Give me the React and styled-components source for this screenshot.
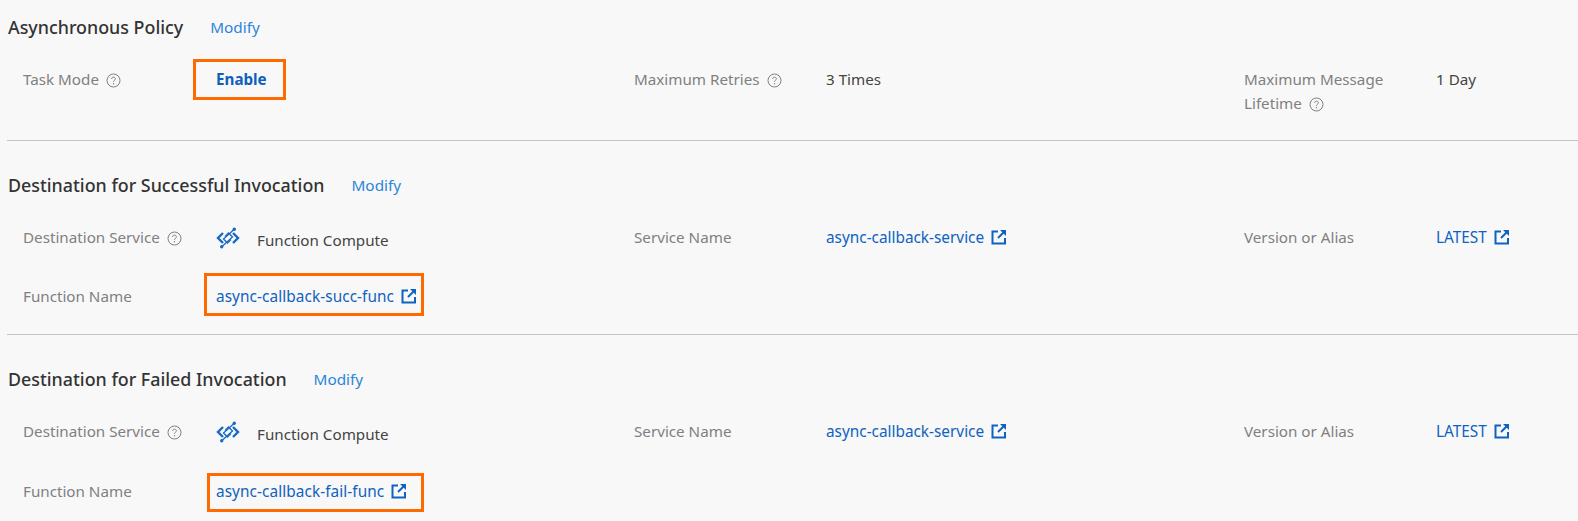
import React from 'react';
import styled, { createGlobalStyle } from 'styled-components';

const GlobalStyle = createGlobalStyle`
    html, body {
        margin: 0;
        padding: 0;
        background: #f8f8f8;
    }
    body {
        font-family: "Noto Sans", "Open Sans", sans-serif;
    }
`;

const Page = styled.div`
    width: 1578px;
    height: 521px;
    overflow: hidden;
    padding-left: 7px;
    box-sizing: border-box;
`;

const Section = styled.section`
    height: ${(p) => p.$height}px;
    padding-top: ${(p) => p.$top}px;
    box-sizing: border-box;
    border-bottom: ${(p) => (p.$last ? 'none' : '1px solid #c3c5cb')};
`;

const TitleRow = styled.div`
    display: flex;
    align-items: center;
    height: 24px;
    padding-left: 1px;
`;

const Title = styled.h3`
    margin: 0;
    font-size: 17.85px;
    font-weight: 500;
    color: #333;
`;

const Modify = styled.a`
    margin-left: 27px;
    font-size: 15.3px;
    color: #2b85d8;
`;

const Grid = styled.div`
    display: grid;
    grid-template-columns: 611px 610px 1fr;
    row-gap: ${(p) => p.$gap}px;
    margin-top: ${(p) => p.$top}px;
`;

const Item = styled.div`
    display: flex;
    align-items: flex-start;
    padding-left: 16px;
    line-height: 24px;
    font-size: 15.2px;
`;

const Label = styled.div`
    width: ${(p) => (p.$first ? 193 : 192)}px;
    flex: none;
    color: #808080;
`;

const Value = styled.div`
    display: flex;
    align-items: center;
    color: #444;
`;

const ServiceText = styled.span`
    position: relative;
    top: 3px;
`;

const Link = styled.a`
    display: inline-flex;
    align-items: center;
    font-size: 15.35px;
    letter-spacing: ${(p) => (p.$wide ? '0.08px' : 'normal')};
    color: #0f62c0;
`;

const Strong = styled.span`
    font-weight: 700;
    color: #0f5fbd;
`;

const Marked = styled.span`
    position: relative;
    display: inline-flex;
    align-items: center;

    &::after {
        content: '';
        position: absolute;
        top: ${(p) => p.$t}px;
        bottom: ${(p) => p.$b}px;
        left: ${(p) => p.$l}px;
        right: ${(p) => p.$r}px;
        border: 3px solid #ff6a00;
    }
`;

const HelpSvg = styled.svg`
    width: 15px;
    height: 15px;
    margin-left: 7px;
    vertical-align: -3px;
`;

const OutSvg = styled.svg`
    width: 16px;
    height: 16px;
    margin-left: 7px;
    flex: none;
`;

const FcSvg = styled.svg`
    width: 24px;
    height: 24px;
    margin-right: 17px;
    flex: none;
    position: relative;
    top: 1px;
`;

const Help = () => (
    <HelpSvg viewBox="0 0 15 15" fill="none" stroke="#808080">
        <circle cx="7.5" cy="7.5" r="6.5" strokeWidth="1" />
        <path d="M5.6 6c0-1.2.9-1.9 1.9-1.9s1.9.7 1.9 1.7c0 1.5-1.9 1.5-1.9 3" strokeWidth="1" />
        <circle cx="7.5" cy="10.8" r=".7" fill="#808080" stroke="none" />
    </HelpSvg>
);

const External = () => (
    <OutSvg viewBox="0 0 16 16" fill="none" stroke="#0f62c0" strokeWidth="2">
        <path d="M7 2.5H1.5v12H14V9" />
        <path d="M7 9 13 3" />
        <path d="M9 1h6v6z" fill="#0f62c0" stroke="none" />
    </OutSvg>
);

const FcIcon = () => (
    <FcSvg viewBox="0 0 24 24" fill="none" stroke="#1769c4">
        <path d="M7 7 2 12l5 5M17 7l5 5-5 5" strokeWidth="2.4" />
        <path d="M18 3.5 7.5 13l4 4 3.5-3.5" strokeWidth="1.3" />
        <path d="M6 20.5 16.5 11l-4-4L9 10.5" strokeWidth="1.3" />
        <circle cx="18.3" cy="3.2" r="1.7" fill="#1769c4" stroke="none" />
        <circle cx="5.7" cy="20.8" r="1.7" fill="#1769c4" stroke="none" />
    </FcSvg>
);

const DestinationRows = ({ funcName, mark, top, gap }) => (
    <Grid $top={top} $gap={gap}>
        <Item>
            <Label $first>Destination Service<Help /></Label>
            <Value><FcIcon /><ServiceText>Function Compute</ServiceText></Value>
        </Item>
        <Item>
            <Label>Service Name</Label>
            <Value><Link>async-callback-service<External /></Link></Value>
        </Item>
        <Item>
            <Label>Version or Alias</Label>
            <Value><Link>LATEST<External /></Link></Value>
        </Item>
        <Item>
            <Label $first>Function Name</Label>
            <Value>
                <Marked {...mark}>
                    <Link $wide>{funcName}<External /></Link>
                </Marked>
            </Value>
        </Item>
    </Grid>
);

export default function App() {
    return (
        <Page>
            <GlobalStyle />
            <Section $height={141} $top={15}>
                <TitleRow>
                    <Title>Asynchronous Policy</Title>
                    <Modify>Modify</Modify>
                </TitleRow>
                <Grid $top={28} $gap={0}>
                    <Item>
                        <Label $first>Task Mode<Help /></Label>
                        <Value>
                            <Marked $t={-8} $b={-9} $l={-23} $r={-19}>
                                <Strong>Enable</Strong>
                            </Marked>
                        </Value>
                    </Item>
                    <Item>
                        <Label>Maximum Retries<Help /></Label>
                        <Value>3 Times</Value>
                    </Item>
                    <Item>
                        <Label>Maximum Message<br />Lifetime<Help /></Label>
                        <Value>1 Day</Value>
                    </Item>
                </Grid>
            </Section>
            <Section $height={194} $top={32}>
                <TitleRow>
                    <Title>Destination for Successful Invocation</Title>
                    <Modify>Modify</Modify>
                </TitleRow>
                <DestinationRows
                    top={28}
                    gap={35}
                    funcName="async-callback-succ-func"
                    mark={{ $t: -11, $b: -8, $l: -12, $r: -7 }}
                />
            </Section>
            <Section $height={186} $top={32} $last>
                <TitleRow>
                    <Title>Destination for Failed Invocation</Title>
                    <Modify>Modify</Modify>
                </TitleRow>
                <DestinationRows
                    top={28}
                    gap={36}
                    funcName="async-callback-fail-func"
                    mark={{ $t: -6, $b: -9, $l: -9, $r: -17 }}
                />
            </Section>
        </Page>
    );
}
